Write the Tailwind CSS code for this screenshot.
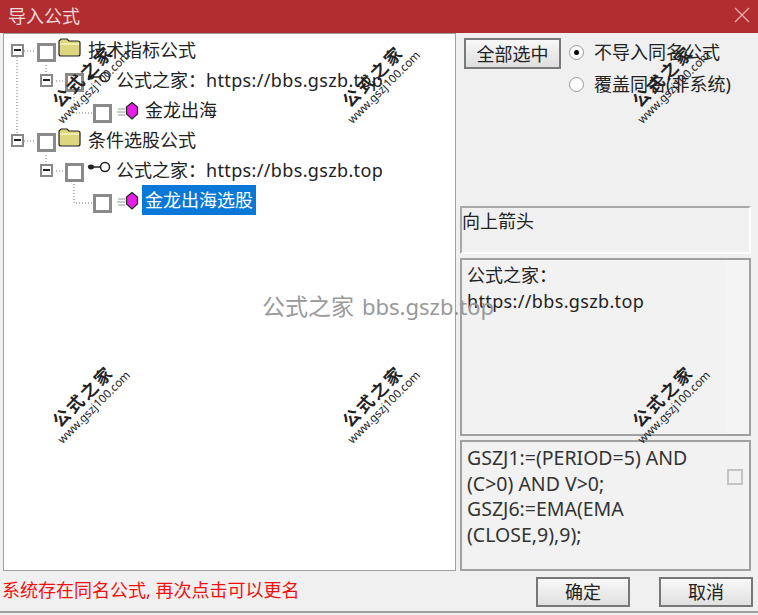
<!DOCTYPE html>
<html lang="zh-CN">
<head>
    <meta charset="UTF-8">
    <title>导入公式</title>
    <script src="https://cdn.jsdelivr.net/npm/@tailwindcss/browser@4"></script>
</head>
<body class="m-0 overflow-hidden bg-[#f0f0f0]">
<div class="relative w-[758px] h-[615px] overflow-hidden bg-[#f0f0f0] text-[18px] text-[#222] font-['Noto_Sans','Noto_Sans_CJK_SC',sans-serif]">

    <!-- title bar -->
    <div class="h-[33px] bg-[#b22d30] flex items-center justify-between pl-2 pr-[8px]">
        <span class="text-[18px] text-[#f0d8d8] -mt-[1px]">导入公式</span>
        <svg width="16" height="16" viewBox="0 0 16 16" class="-mt-[3px]"><path d="M1 1 L15 15 M15 1 L1 15" stroke="#e8a9a9" stroke-width="1.4"/></svg>
    </div>

    <div class="flex h-[539px] pl-[3px] pr-[7px]">
        <!-- tree -->
        <div class="relative w-[453px] h-[538px] bg-white border border-[#a0a0a0] pt-[1px]">
            <svg class="absolute left-0 top-0" width="130" height="190">
                <g stroke="#777" stroke-dasharray="1 2" fill="none">
                    <path d="M13 23 V103 M20 17 H32 M42 31 V42 M52 47 H60 M70 60 V79 H89"/>
                    <path d="M20 107 H32 M42 121 V131 M52 137 H60 M70 150 V169 H89"/>
                </g>
            </svg>

            <div class="h-[30px] flex items-center pl-[7px] leading-none">
                <span class="w-[13px] h-[13px] border-2 border-[#888] bg-white flex items-center justify-center"><span class="w-[7px] h-[2px] bg-[#222]"></span></span>
                <span class="ml-[13px] w-[19px] h-[19px] mt-[4px] border-[3px] border-[#8a8a8a] bg-white"></span>
                <svg class="ml-[2px] -mt-[7px]" width="23" height="20" viewBox="0 0 23 20"><path d="M1 17 V4 L3 2 H9 L11 4 H20 Q22 4 22 6 V17 Q22 19 20 19 H3 Q1 19 1 17Z" fill="#ddd67e" stroke="#222" stroke-width="1.2"/><path d="M2 7 H21" stroke="#f8f4c0" stroke-width="1.5"/></svg>
                <span class="ml-[7px] -mt-[1px]">技术指标公式</span>
            </div>
            <div class="h-[30px] flex items-center pl-[36px] leading-none">
                <span class="w-[13px] h-[13px] border-2 border-[#888] bg-white flex items-center justify-center"><span class="w-[7px] h-[2px] bg-[#222]"></span></span>
                <span class="ml-[12px] w-[19px] h-[19px] mt-[4px] border-[3px] border-[#8a8a8a] bg-white"></span>
                <svg class="ml-[3px] -mt-[6px]" width="24" height="12" viewBox="0 0 24 12"><circle cx="18" cy="6" r="4.5" fill="none" stroke="#222" stroke-width="1.5"/><path d="M13 6 H3" stroke="#222" stroke-width="1.5" fill="none"/><ellipse cx="4" cy="6" rx="3" ry="2.4" fill="#222"/></svg>
                <span class="ml-[5px] -mt-[1px]">公式之家：<span class="tracking-[0.35px]">https://bbs.gszb.top</span></span>
            </div>
            <div class="h-[30px] flex items-center pl-[89px] leading-none">
                <span class="w-[19px] h-[19px] mt-[6px] border-[3px] border-[#8a8a8a] bg-white"></span>
                <svg class="ml-[4px] mt-[1px]" width="23" height="18" viewBox="0 0 23 18"><path d="M2 7 H9 M1 10 H9 M2 13 H9" stroke="#8a9a8a" stroke-width="1"/><path d="M16 0.5 L21.5 5 V12 L16 17 L10.5 12 V5Z" fill="#e61ee6" stroke="#222" stroke-width="1.2"/></svg>
                <span class="ml-[6px] -mt-[1px]">金龙出海</span>
            </div>
            <div class="h-[30px] flex items-center pl-[7px] leading-none">
                <span class="w-[13px] h-[13px] border-2 border-[#888] bg-white flex items-center justify-center"><span class="w-[7px] h-[2px] bg-[#222]"></span></span>
                <span class="ml-[13px] w-[19px] h-[19px] mt-[4px] border-[3px] border-[#8a8a8a] bg-white"></span>
                <svg class="ml-[2px] -mt-[7px]" width="23" height="20" viewBox="0 0 23 20"><path d="M1 17 V4 L3 2 H9 L11 4 H20 Q22 4 22 6 V17 Q22 19 20 19 H3 Q1 19 1 17Z" fill="#ddd67e" stroke="#222" stroke-width="1.2"/><path d="M2 7 H21" stroke="#f8f4c0" stroke-width="1.5"/></svg>
                <span class="ml-[7px] -mt-[1px]">条件选股公式</span>
            </div>
            <div class="h-[30px] flex items-center pl-[36px] leading-none">
                <span class="w-[13px] h-[13px] border-2 border-[#888] bg-white flex items-center justify-center"><span class="w-[7px] h-[2px] bg-[#222]"></span></span>
                <span class="ml-[12px] w-[19px] h-[19px] mt-[4px] border-[3px] border-[#8a8a8a] bg-white"></span>
                <svg class="ml-[3px] -mt-[6px]" width="24" height="12" viewBox="0 0 24 12"><circle cx="18" cy="6" r="4.5" fill="none" stroke="#222" stroke-width="1.5"/><path d="M13 6 H3" stroke="#222" stroke-width="1.5" fill="none"/><ellipse cx="4" cy="6" rx="3" ry="2.4" fill="#222"/></svg>
                <span class="ml-[5px] -mt-[1px]">公式之家：<span class="tracking-[0.35px]">https://bbs.gszb.top</span></span>
            </div>
            <div class="h-[30px] flex items-center pl-[89px] leading-none">
                <span class="w-[19px] h-[19px] mt-[6px] border-[3px] border-[#8a8a8a] bg-white"></span>
                <svg class="ml-[4px] mt-[1px]" width="23" height="18" viewBox="0 0 23 18"><path d="M2 7 H9 M1 10 H9 M2 13 H9" stroke="#8a9a8a" stroke-width="1"/><path d="M16 0.5 L21.5 5 V12 L16 17 L10.5 12 V5Z" fill="#e61ee6" stroke="#222" stroke-width="1.2"/></svg>
                <span class="ml-[3px] h-[30px] pl-[3px] w-[114px] bg-[#0a78d7] text-white flex items-center whitespace-nowrap">金龙出海选股</span>
            </div>
        </div>

        <!-- right column -->
        <div class="flex-1 flex flex-col pl-[4px]">
            <div class="h-[174px] flex items-start pt-[5px] pl-[4px]">
                <button class="w-[97px] h-[31px] border-2 border-[#7a7a7a] bg-gradient-to-b from-[#f8f8f8] to-[#dedede] text-[18px] leading-none">全部选中</button>
                <div class="ml-[8px] pt-[2px] flex flex-col gap-[8px]">
                    <div class="flex items-center h-[24px]">
                        <span class="w-[15px] h-[15px] rounded-full border border-[#999] bg-white flex items-center justify-center"><span class="w-[5px] h-[5px] rounded-full bg-black"></span></span>
                        <span class="ml-[10px]">不导入同名公式</span>
                    </div>
                    <div class="flex items-center h-[24px]">
                        <span class="w-[15px] h-[15px] rounded-full border border-[#999] bg-white"></span>
                        <span class="ml-[10px]">覆盖同名(非系统)</span>
                    </div>
                </div>
            </div>
            <div class="h-[48px] border-2 border-[#a8a8a8] border-r-white border-b-white leading-[26px] -mt-[1px]">向上箭头</div>
            <div class="mt-[4px] h-[178px] border-2 border-[#a0a0a0] bg-[#f2f2f2] flex">
                <div class="flex-1 px-[5px] pt-[2px] leading-[26px]">公式之家：<br><span class="tracking-[0.35px]">https://bbs.gszb.top</span></div>
                <div class="w-[23px] bg-[#f5f4f4]"></div>
            </div>
            <div class="mt-[4px] h-[131px] border-2 border-[#a0a0a0] bg-[#f2f2f2] flex">
                <div class="flex-1 pl-[5px] pt-[3px] leading-[25.5px] text-[19.5px] text-[#333] whitespace-nowrap">GSZJ1:=(PERIOD=5) AND<br>(C&gt;0) AND V&gt;0;<br>GSZJ6:=EMA(EMA<br>(CLOSE,9),9);</div>
                <div class="w-[27px] pt-[27px] pl-[5px]"><div class="w-[16px] h-[16px] border-2 border-[#c4c4c4]"></div></div>
            </div>
        </div>
    </div>

    <!-- bottom bar -->
    <div class="h-[41px] flex items-center pl-[2px] pr-[5px] border-b-2 border-[#a0a0a0]">
        <span class="text-[#f01010] text-[18px] -mt-[2px] whitespace-nowrap">系统存在同名公式, 再次点击可以更名</span>
        <button class="ml-auto w-[94px] h-[30px] border-2 border-[#777] bg-gradient-to-b from-[#f8f8f8] to-[#e0e0e0] text-[18px] leading-none">确定</button>
        <button class="ml-[29px] w-[94px] h-[30px] border-2 border-[#777] bg-gradient-to-b from-[#f8f8f8] to-[#e0e0e0] text-[18px] leading-none">取消</button>
    </div>

    <!-- watermarks -->
    <span class="absolute left-[262px] top-[291px] inline-flex items-baseline gap-[8px] leading-[30px] text-[#999] whitespace-nowrap"><span class="text-[23px]">公式之家</span><span class="text-[22px]">bbs.gszb.top</span></span>

    <div class="absolute left-[27px] top-[65px] w-[120px] text-center -rotate-45 leading-none text-[#222]"><div class="text-[17px] font-bold tracking-[2.5px] font-['Noto_Sans_CJK_SC',serif]">公式之家</div><div class="text-[11.5px] mt-[2px]">www.gszj100.com</div></div>
    <div class="absolute left-[317px] top-[65px] w-[120px] text-center -rotate-45 leading-none text-[#222]"><div class="text-[17px] font-bold tracking-[2.5px] font-['Noto_Sans_CJK_SC',serif]">公式之家</div><div class="text-[11.5px] mt-[2px]">www.gszj100.com</div></div>
    <div class="absolute left-[607px] top-[65px] w-[120px] text-center -rotate-45 leading-none text-[#222]"><div class="text-[17px] font-bold tracking-[2.5px] font-['Noto_Sans_CJK_SC',serif]">公式之家</div><div class="text-[11.5px] mt-[2px]">www.gszj100.com</div></div>
    <div class="absolute left-[27px] top-[385px] w-[120px] text-center -rotate-45 leading-none text-[#222]"><div class="text-[17px] font-bold tracking-[2.5px] font-['Noto_Sans_CJK_SC',serif]">公式之家</div><div class="text-[11.5px] mt-[2px]">www.gszj100.com</div></div>
    <div class="absolute left-[317px] top-[385px] w-[120px] text-center -rotate-45 leading-none text-[#222]"><div class="text-[17px] font-bold tracking-[2.5px] font-['Noto_Sans_CJK_SC',serif]">公式之家</div><div class="text-[11.5px] mt-[2px]">www.gszj100.com</div></div>
    <div class="absolute left-[607px] top-[385px] w-[120px] text-center -rotate-45 leading-none text-[#222]"><div class="text-[17px] font-bold tracking-[2.5px] font-['Noto_Sans_CJK_SC',serif]">公式之家</div><div class="text-[11.5px] mt-[2px]">www.gszj100.com</div></div>
</div>
</body>
</html>
